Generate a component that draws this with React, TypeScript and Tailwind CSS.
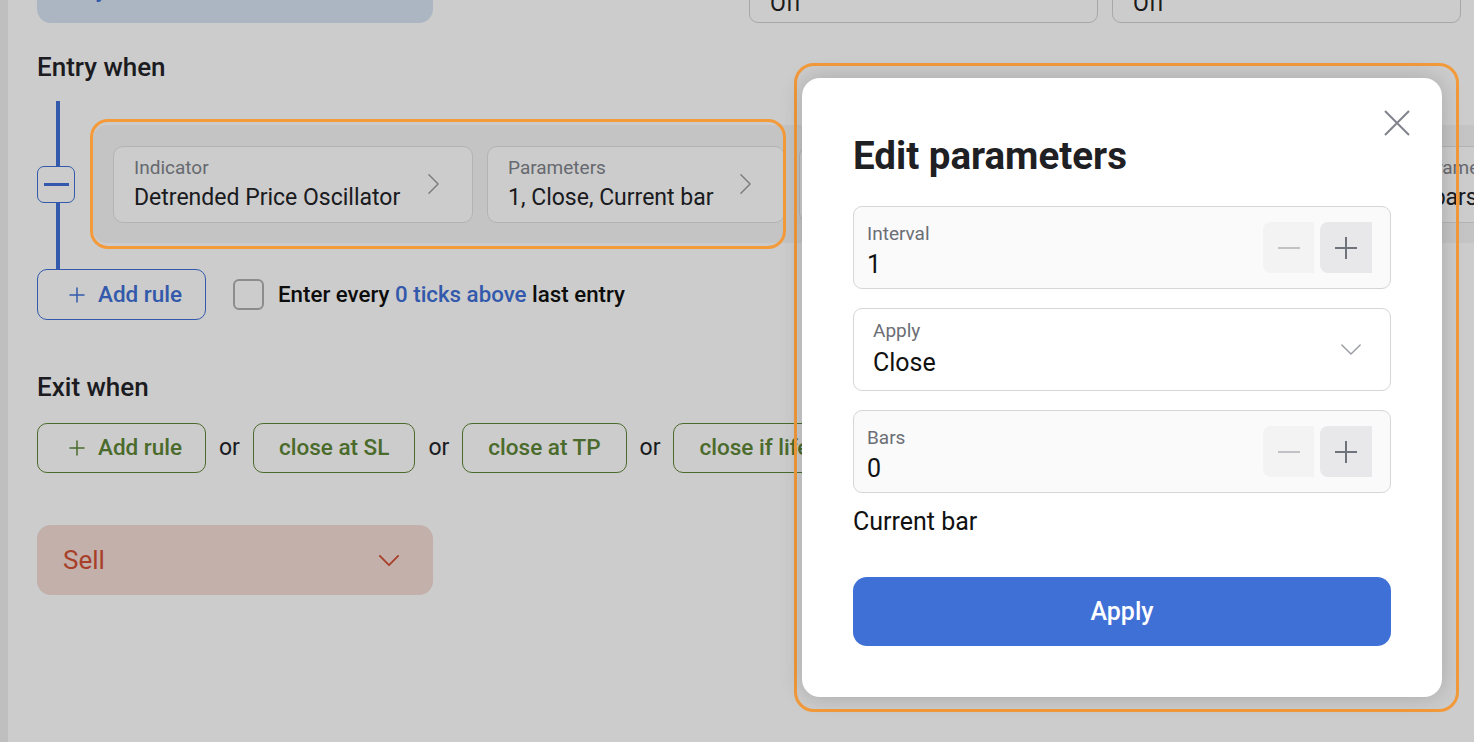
import { Plus } from 'lucide-react';

const blue = 'text-[#3f70d6]';

function Chevron({ className, dir = 'right', strokeWidth = 1.5 }: { className: string; dir?: 'right' | 'down'; strokeWidth?: number }) {
  return dir === 'right' ? (
    <svg className={className} viewBox="0 0 14 24" fill="none" stroke="currentColor" strokeWidth={strokeWidth} strokeLinecap="round" strokeLinejoin="round">
      <path d="M2 2 L12 12 L2 22" />
    </svg>
  ) : (
    <svg className={className} viewBox="0 0 24 14" fill="none" stroke="currentColor" strokeWidth={strokeWidth} strokeLinecap="round" strokeLinejoin="round">
      <path d="M2 2 L12 12 L22 2" />
    </svg>
  );
}

function RuleCard({ label, value, width, pl = 'pl-[20px]' }: { label: string; value: string; width: string; pl?: string }) {
  return (
    <div className={`flex h-[77px] shrink-0 items-center justify-between rounded-[10px] border border-[#e0e0e0] bg-white pr-[32px] ${pl} ${width}`}>
      <div className="flex flex-col whitespace-nowrap">
        <span className="text-[19px] leading-[22px] text-[#80848b]">{label}</span>
        <span className="mt-[5px] text-[23px] leading-[28px] text-[#222327]">{value}</span>
      </div>
      <Chevron className="h-[22px] w-[13px] shrink-0 text-[#9a9a9a]" />
    </div>
  );
}

function ExitButton({ children }: { children: React.ReactNode }) {
  return (
    <button className="flex h-[50px] shrink-0 items-center whitespace-nowrap rounded-[10px] border border-[#5d8636] px-[25px] text-[22.5px] font-medium text-[#5d8636]">
      {children}
    </button>
  );
}

function StepGlyph({ plus }: { plus?: boolean }) {
  return (
    <svg className="h-[22px] w-[22px]" viewBox="0 0 22 22" fill="none" stroke="currentColor" strokeWidth={2}>
      <path d="M0 11 H22" />
      {plus && <path d="M11 0 V22" />}
    </svg>
  );
}

function NumberField({ label, value }: { label: string; value: string }) {
  return (
    <div className="flex h-[83px] items-start justify-between rounded-[9px] border border-[#d6d6da] bg-[#fafafa] pl-[13px] pr-[18px]">
      <div className="flex flex-col pt-[16px]">
        <span className="text-[19px] leading-[22px] text-[#6b6e75]">{label}</span>
        <span className="mt-[5px] text-[25px] leading-[30px] text-[#111]">{value}</span>
      </div>
      <div className="mt-[15px] flex gap-[6px]">
        <button className="flex h-[51px] w-[51px] items-center justify-center rounded-l-[8px] bg-[#f3f3f4] text-[#c2c2c6]">
          <StepGlyph />
        </button>
        <button className="flex h-[51px] w-[52px] items-center justify-center rounded-l-[8px] bg-[#e8e8ea] text-[#6f737b]">
          <StepGlyph plus />
        </button>
      </div>
    </div>
  );
}

export default function App() {
  return (
    <div className="relative h-[742px] w-[1474px] overflow-hidden bg-white font-['Roboto','Liberation_Sans',sans-serif]">
      <div className="flex h-full">
        <div className="w-2 shrink-0 bg-[#efefef]" />
        <main className="flex min-w-0 flex-1 flex-col pl-[29px]">
          {/* top row */}
          <div className="-mt-[47px] flex items-end">
            <div className="flex h-[70px] w-[396px] shrink-0 items-center justify-between rounded-[14px] bg-[#d8e4f4] pl-[28px] pr-[33px]">
              <span className="text-[26px] leading-[30px] text-[#3f70d6]">Buy</span>
              <Chevron dir="down" className="h-[13px] w-[22px] text-[#3f70d6]" strokeWidth={2} />
            </div>
            <div className="ml-[316px] flex gap-[14px]">
              {['Off', 'Off'].map((v, i) => (
                <div key={i} className="flex h-[56px] w-[349px] items-end rounded-[9px] border border-[#d3d3d3] bg-white px-[20px] pb-[5px]">
                  <span className="text-[23px] leading-[26px] text-[#222]">{v}</span>
                </div>
              ))}
            </div>
          </div>

          {/* entry */}
          <h2 className="mt-[28px] text-[26px] font-medium leading-[32px] text-[#232428]">Entry when</h2>
          <div className="mt-[18px] flex h-[168px]">
            <div className="flex w-[38px] shrink-0 flex-col">
              <div className="ml-[19px] h-[65px] w-[4px] bg-[#3f70d6]" />
              <button className="flex h-[37px] w-[38px] items-center justify-center rounded-[7px] border border-[#3f70d6]">
                <span className="h-[3px] w-[25px] bg-[#3f70d6]" />
              </button>
              <div className="ml-[19px] w-[4px] flex-1 bg-[#3f70d6]" />
            </div>
            <div className="ml-[18px] mt-[24px] flex h-[118px] items-center gap-[14px] rounded-l-[14px] bg-[#f5f5f5] pl-[20px]">
              <RuleCard label="Indicator" value="Detrended Price Oscillator" width="w-[360px]" />
              <RuleCard label="Parameters" value="1, Close, Current bar" width="w-[298px]" />
              <RuleCard label="Condition" value="Crosses above" width="w-[585px]" />
              <RuleCard label="Parameters" value="0 bars" width="w-[300px]" pl="pl-[15px]" />
            </div>
          </div>
          <div className="flex h-[51px] items-center">
            <button className={`flex h-[51px] w-[169px] items-center gap-[9px] rounded-[10px] border border-[#3f70d6] pl-[27px] text-[22.5px] font-medium ${blue}`}>
              <Plus className="h-[24px] w-[24px]" strokeWidth={1.5} />
              Add rule
            </button>
            <span className="ml-[27px] h-[31px] w-[31px] rounded-[6px] border-2 border-[#b0b0b0] bg-white" />
            <span className="ml-[14px] text-[22.3px] font-medium text-[#111]">
              Enter every <span className={blue}>0 ticks above</span> last entry
            </span>
          </div>

          {/* exit */}
          <h2 className="mt-[51px] text-[26px] font-medium leading-[32px] text-[#232428]">Exit when</h2>
          <div className="mt-[20px] flex items-center gap-[13px]">
            <button className="flex h-[50px] w-[169px] shrink-0 items-center gap-[9px] rounded-[10px] border border-[#5d8636] pl-[27px] text-[22.5px] font-medium text-[#5d8636]">
              <Plus className="h-[24px] w-[24px]" strokeWidth={1.5} />
              Add rule
            </button>
            <span className="text-[23px] text-[#232428]">or</span>
            <ExitButton>close at SL</ExitButton>
            <span className="text-[23px] text-[#232428]">or</span>
            <ExitButton>close at TP</ExitButton>
            <span className="text-[23px] text-[#232428]">or</span>
            <ExitButton>close if lifetime is over</ExitButton>
          </div>

          <div className="mt-[52px] flex h-[70px] w-[396px] items-center justify-between rounded-[14px] bg-[#f4dcd6] pl-[26px] pr-[33px]">
            <span className="text-[26px] text-[#d25034]">Sell</span>
            <Chevron dir="down" className="h-[13px] w-[22px] text-[#d25034]" strokeWidth={2} />
          </div>
        </main>
      </div>

      {/* dim overlay */}
      <div className="pointer-events-none absolute inset-0 bg-black/20" />

      {/* highlight around the rule */}
      <div className="pointer-events-none absolute left-[90px] top-[119px] h-[130px] w-[696px] rounded-[18px] border-[3px] border-[#f39a3a]" />

      {/* highlight around the dialog */}
      <div className="pointer-events-none absolute left-[794px] top-[63px] h-[649px] w-[665px] rounded-[20px] border-[3px] border-[#f39a3a]" />

      {/* dialog */}
      <div className="absolute left-[802px] top-[78px] flex h-[619px] w-[640px] flex-col rounded-[18px] bg-white px-[51px] pt-[56px] shadow-[0_0_22px_rgba(0,0,0,0.18)]">
        <button className="absolute left-[582px] top-[32px] text-[#7f838b]">
          <svg className="h-[26px] w-[26px]" viewBox="0 0 26 26" fill="none" stroke="currentColor" strokeWidth={2}>
            <path d="M1 1 L25 25 M25 1 L1 25" />
          </svg>
        </button>
        <h1 className="text-[38.5px] font-bold leading-[44px] text-[#1f2023]">Edit parameters</h1>
        <div className="mt-[28px] flex flex-col gap-[19px]">
          <NumberField label="Interval" value="1" />
          <div className="flex h-[83px] items-center justify-between rounded-[9px] border border-[#d6d6da] bg-white pl-[19px] pr-[28px]">
            <div className="flex flex-col pb-[2px]">
              <span className="text-[19px] leading-[22px] text-[#6b6e75]">Apply</span>
              <span className="mt-[6px] text-[25px] leading-[30px] text-[#111]">Close</span>
            </div>
            <Chevron dir="down" className="h-[13px] w-[22px] text-[#9a9da3]" strokeWidth={1.6} />
          </div>
          <NumberField label="Bars" value="0" />
        </div>
        <p className="mt-[14px] text-[25px] leading-[30px] text-[#111]">Current bar</p>
        <button className="mt-[40px] h-[69px] w-full rounded-[14px] bg-[#3f70d6] text-[25px] font-medium text-white">
          Apply
        </button>
      </div>
    </div>
  );
}
